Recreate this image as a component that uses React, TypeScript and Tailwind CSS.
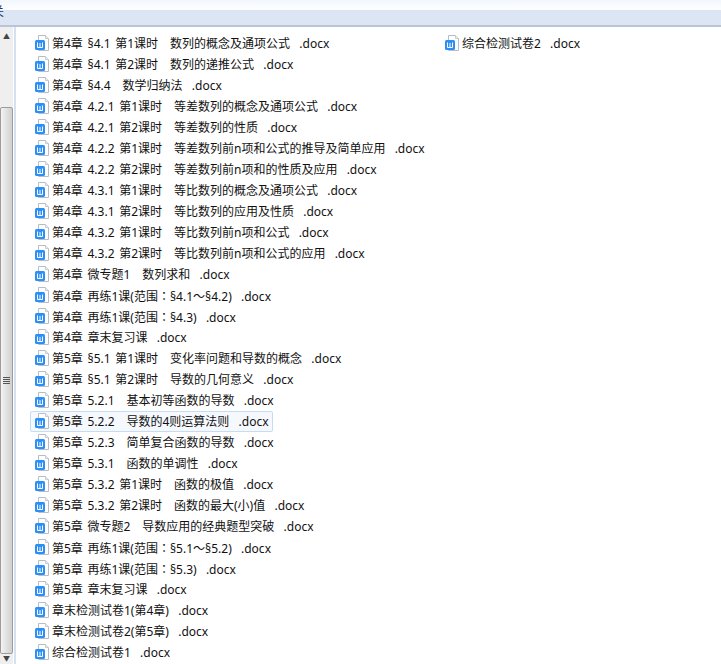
import React from 'react';

const column1 = [
  '第4章 §4.1 第1课时\u3000数列的概念及通项公式  .docx',
  '第4章 §4.1 第2课时\u3000数列的递推公式  .docx',
  '第4章 §4.4\u3000数学归纳法  .docx',
  '第4章 4.2.1 第1课时\u3000等差数列的概念及通项公式  .docx',
  '第4章 4.2.1 第2课时\u3000等差数列的性质  .docx',
  '第4章 4.2.2 第1课时\u3000等差数列前n项和公式的推导及简单应用  .docx',
  '第4章 4.2.2 第2课时\u3000等差数列前n项和的性质及应用  .docx',
  '第4章 4.3.1 第1课时\u3000等比数列的概念及通项公式  .docx',
  '第4章 4.3.1 第2课时\u3000等比数列的应用及性质  .docx',
  '第4章 4.3.2 第1课时\u3000等比数列前n项和公式  .docx',
  '第4章 4.3.2 第2课时\u3000等比数列前n项和公式的应用  .docx',
  '第4章 微专题1\u3000数列求和  .docx',
  '第4章 再练1课(范围：§4.1～§4.2)  .docx',
  '第4章 再练1课(范围：§4.3)  .docx',
  '第4章 章末复习课  .docx',
  '第5章 §5.1 第1课时\u3000变化率问题和导数的概念  .docx',
  '第5章 §5.1 第2课时\u3000导数的几何意义  .docx',
  '第5章 5.2.1\u3000基本初等函数的导数  .docx',
  '第5章 5.2.2\u3000导数的4则运算法则  .docx',
  '第5章 5.2.3\u3000简单复合函数的导数  .docx',
  '第5章 5.3.1\u3000函数的单调性  .docx',
  '第5章 5.3.2 第1课时\u3000函数的极值  .docx',
  '第5章 5.3.2 第2课时\u3000函数的最大(小)值  .docx',
  '第5章 微专题2\u3000导数应用的经典题型突破  .docx',
  '第5章 再练1课(范围：§5.1～§5.2)  .docx',
  '第5章 再练1课(范围：§5.3)  .docx',
  '第5章 章末复习课  .docx',
  '章末检测试卷1(第4章)  .docx',
  '章末检测试卷2(第5章)  .docx',
  '综合检测试卷1  .docx',
];

const WordIcon = () => (
  <svg width="16" height="16" viewBox="0 0 16 16" className="-mt-[1px] shrink-0">
    <path d="M4.5 0.5H11.5L14.5 3.5V15.5H4.5Z" fill="#fff" stroke="#b4bdc8" />
    <path d="M11.5 0.5V3.5H14.5" fill="#eef2f6" stroke="#c5ccd5" />
    <rect x="1" y="5" width="10" height="10" rx="1.5" fill="#2b8ff5" />
    <path d="M3.5 7.5V12.5H8.5V7.5M6 8V12" fill="none" stroke="#fff" strokeWidth="1" />
  </svg>
);

const FileRow = ({ name, selected }: { name: string; selected?: boolean }) => {
  // the full-width colon sits centred in the original, as in the TC glyph set
  const [before, after] = name.split('：');
  return (
    <div
      className={`flex h-[21px] items-center gap-[2px] whitespace-pre rounded-[2px] border pl-[3px] pr-[3px] ${
        selected ? 'w-fit border-[#c5dcf5] bg-[#f5f9fe]' : 'border-transparent'
      }`}
    >
      <WordIcon />
      <span className="text-[12px] leading-[21px] text-[#111] [word-spacing:1.5px]">
        {before}
        {after !== undefined && <span className="font-['Noto_Sans_CJK_TC']">：</span>}
        {after}
      </span>
    </div>
  );
};

export default function App() {
  return (
    <div className="flex h-[664px] w-[721px] flex-col overflow-hidden bg-white font-['Noto_Sans','Noto_Sans_CJK_SC',sans-serif]">
      {/* Address bar strip */}
      <div className="h-[27px] shrink-0 border-b-2 border-[#b9c5d6] bg-gradient-to-b from-[#f2f7fd] via-[#fdfeff] via-[40%] to-[#dbe5f3] to-[41%]">
        <span className="-ml-[8px] block pt-[5px] text-[12px] leading-[14px] text-[#1e3a5f]">关</span>
      </div>

      <div className="flex min-h-0 flex-1">
        {/* Tree pane sliver with its scrollbar */}
        <div className="flex w-[16px] shrink-0 border-r-2 border-[#d5e0f0] bg-white">
          <div className="flex w-[13px] flex-col bg-[#efefef]">
            <div className="h-[80px] pt-[5px] text-center text-[7px] leading-[10px] text-[#444]">▲</div>
            <div className="flex flex-1 items-center justify-center rounded-[2px] border border-[#9c9c9c] bg-gradient-to-r from-[#f4f4f4] to-[#cfcfcf]">
              <div className="flex flex-col gap-[1px]">
                <div className="h-[1px] w-[7px] bg-[#555]" />
                <div className="h-[1px] w-[7px] bg-[#555]" />
                <div className="h-[1px] w-[7px] bg-[#555]" />
                <div className="h-[1px] w-[7px] bg-[#555]" />
              </div>
            </div>
            <div className="h-[10px] text-center text-[7px] leading-[10px] text-[#444]">▼</div>
          </div>
        </div>

        {/* File list */}
        <div className="flex flex-1 pl-[14px] pt-[6px]">
          <div className="flex w-[410px] flex-col">
            {column1.map((name) => (
              <FileRow key={name} name={name} selected={name.includes('5.2.2\u3000')} />
            ))}
          </div>
          <div className="flex flex-col">
            <FileRow name={'综合检测试卷2  .docx'} />
          </div>
        </div>
      </div>
    </div>
  );
}
